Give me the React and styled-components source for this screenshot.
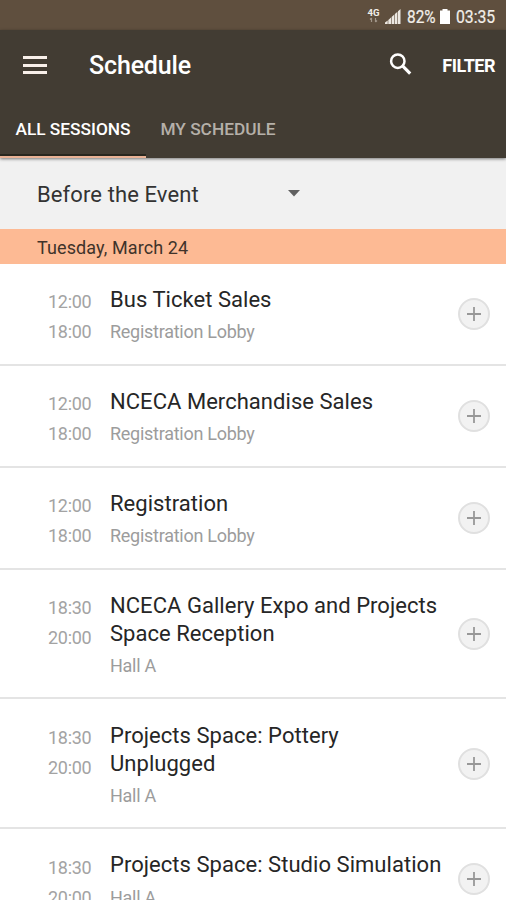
import React from 'react'
import styled, { createGlobalStyle } from 'styled-components'

const GlobalStyle = createGlobalStyle`
*{
  box-sizing:border-box;
}
body{
  margin:0;
  background:#fff;
  font-family:Roboto, sans-serif;
}
`;

const Screen = styled.div`
width:506px;
height:900px;
overflow:hidden;
background:#fff;
`;

const StatusBar = styled.div`
height:30px;
padding:3px 10px 0 0;
display:flex;
align-items:center;
justify-content:flex-end;
background:#5f4f3e;
color:#f3efea;
font-size:17.5px;
`;

const Network = styled.svg`
width:13px;
height:16px;
margin:-2px 5px 0 0;
`;

const Signal = styled.svg`
width:16px;
height:15px;
margin-right:6px;
`;

const Battery = styled.svg`
width:10px;
height:15px;
margin:-1px 6px 0 4px;
`;

const StatusText = styled.span`
transform:scaleX(${(props) => props.$squeeze});
width:${(props) => props.$width}px;
transform-origin:left;
white-space:nowrap;
-webkit-text-stroke:0.2px #f3efea;
`;

const Header = styled.header`
height:128px;
background:#423c33;
position:relative;
box-shadow:0 1px 3px rgba(0,0,0,0.5);
`;

const Toolbar = styled.div`
height:70px;
padding:0 11px 0 23px;
display:flex;
align-items:center;
color:#fff;
`;

const MenuButton = styled.button`
width:24px;
height:18px;
padding:0;
border:none;
background:none;
display:flex;
flex-direction:column;
justify-content:space-between;
`;

const MenuLine = styled.span`
width:24px;
height:3px;
background:#f8efea;
`;

const Title = styled.h1`
margin:0 0 0 42px;
flex:1;
font-size:25px;
font-weight:500;
letter-spacing:-0.15px;
`;

const SearchIcon = styled.svg`
width:24px;
height:24px;
margin:-3px 29px 0 0;
`;

const Filter = styled.span`
font-size:18px;
font-weight:700;
letter-spacing:-0.5px;
`;

const Tabs = styled.nav`
height:58px;
display:flex;
`;

const Tab = styled.div`
width:${(props) => props.$width}px;
padding-top:19px;
text-align:center;
font-size:17.3px;
line-height:21px;
font-weight:500;
white-space:nowrap;
color:${(props) => (props.$active ? '#fff' : '#b5b0a9')};
border-bottom:2px solid ${(props) => (props.$active ? '#e9b296' : 'transparent')};
box-shadow:${(props) => (props.$active ? 'inset 0 -2px 0 #28271f' : 'none')};
`;

const Picker = styled.div`
height:71px;
padding:2px 206px 0 37px;
display:flex;
align-items:center;
justify-content:space-between;
background:#f1f1f1;
color:#333;
font-size:22px;
letter-spacing:0.1px;
`;

const Arrow = styled.svg`
width:12px;
height:7px;
margin-top:-2px;
`;

const DayBar = styled.div`
height:35px;
padding:2px 0 0 37px;
line-height:34px;
background:#fdba94;
color:#40332a;
font-size:18px;
letter-spacing:0.1px;
`;

const Row = styled.div`
display:flex;
align-items:flex-start;
padding:22.2px 16px 18.7px 48px;
border-bottom:2px solid #e4e4e4;
`;

const Times = styled.div`
width:62px;
margin-top:1.3px;
height:46px;
color:#a3a3a3;
font-size:18px;
line-height:30px;
letter-spacing:-0.3px;
`;

const Info = styled.div`
flex:1;
`;

const Name = styled.div`
color:#262626;
font-size:22px;
line-height:28px;
letter-spacing:0.04px;
white-space:pre-line;
`;

const Place = styled.div`
margin:6.3px 0 0.7px;
color:#9c9c9c;
font-size:18px;
line-height:24px;
letter-spacing:-0.27px;
`;

const AddButton = styled.button`
width:32px;
height:32px;
margin-top:-3px;
padding:0;
align-self:center;
display:flex;
align-items:center;
justify-content:center;
border:2px solid #e0e0e0;
border-radius:50%;
background:#f2f2f2;
`;

const sessions = [
  { start: '12:00', end: '18:00', name: 'Bus Ticket Sales', place: 'Registration Lobby' },
  { start: '12:00', end: '18:00', name: 'NCECA Merchandise Sales', place: 'Registration Lobby' },
  { start: '12:00', end: '18:00', name: 'Registration', place: 'Registration Lobby' },
  { start: '18:30', end: '20:00', name: 'NCECA Gallery Expo and Projects\nSpace Reception', place: 'Hall A' },
  { start: '18:30', end: '20:00', name: 'Projects Space: Pottery\nUnplugged', place: 'Hall A' },
  { start: '18:30', end: '20:00', name: 'Projects Space: Studio Simulation', place: 'Hall A' },
]

const Session = ({ session }) => {
  return (
    <Row>
      <Times>
        <div>{session.start}</div>
        <div>{session.end}</div>
      </Times>
      <Info>
        <Name>{session.name}</Name>
        <Place>{session.place}</Place>
      </Info>
      <AddButton aria-label="Add">
        <svg width="14" height="14" viewBox="0 0 14 14">
          <path d="M7 0v14M0 7h14" stroke="#989898" strokeWidth="1.8" />
        </svg>
      </AddButton>
    </Row>
  )
}

const App = () => {
  return (
    <Screen>
      <GlobalStyle />
      <StatusBar>
        <Network viewBox="0 0 13 16">
          <text x="0.5" y="8" fontSize="9" fontWeight="700" fill="#f3efea" textLength="12" lengthAdjust="spacingAndGlyphs">4G</text>
          <path d="M4.5 14v-4M3 11.500l1.500-1.500M8.500 10v4M10 12.500L8.500 14" stroke="#a2978a" strokeWidth="1.2" fill="none" />
        </Network>
        <Signal viewBox="0 0 16 15">
          <path d="M0 15v-1.500l2.700-2V15zM3.300 15v-4l2.700-2.500V15zM6.600 15V8l2.700-2.500V15zM9.900 15V5l2.500-2.300V15zM13 15V2.200L15.500 0v15z" fill="#ece7e1" />
        </Signal>
        <StatusText $width={29} $squeeze={0.88}>82%</StatusText>
        <Battery viewBox="0 0 10 15">
          <path d="M2.500 0h5v1.500H10V15H0V1.500h2.500z" fill="#fff" />
        </Battery>
        <StatusText $width={40} $squeeze={0.9}>03:35</StatusText>
      </StatusBar>
      <Header>
        <Toolbar>
          <MenuButton aria-label="Menu">
            <MenuLine />
            <MenuLine />
            <MenuLine />
          </MenuButton>
          <Title>Schedule</Title>
          <SearchIcon viewBox="0 0 24 24" fill="none" stroke="#fff" strokeWidth="2.5">
            <circle cx="8.800" cy="9.200" r="6.700" />
            <path d="M13.800 14.200L21.200 21.600" strokeWidth="3.200" />
          </SearchIcon>
          <Filter>FILTER</Filter>
        </Toolbar>
        <Tabs>
          <Tab $active $width={146}>ALL SESSIONS</Tab>
          <Tab $width={144}>MY SCHEDULE</Tab>
        </Tabs>
      </Header>
      <Picker>
        <span>Before the Event</span>
        <Arrow viewBox="0 0 12 7">
          <path d="M0 0h12L6 6.500z" fill="#606060" />
        </Arrow>
      </Picker>
      <DayBar>Tuesday, March 24</DayBar>
      {sessions.map((session) => (
        <Session key={session.name} session={session} />
      ))}
    </Screen>
  )
}

export default App
